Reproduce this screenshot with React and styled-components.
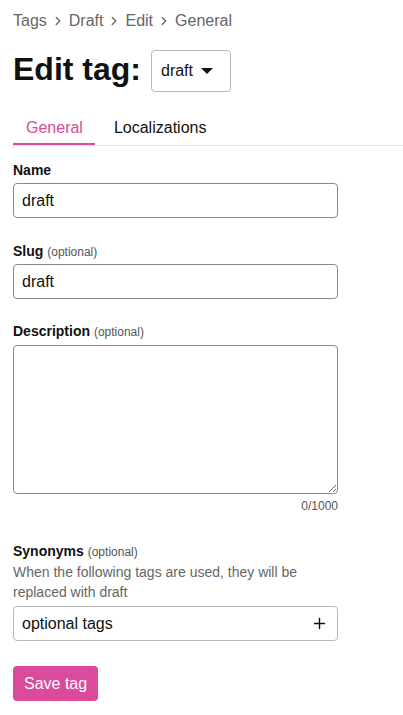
import React from "react";
import styled, { createGlobalStyle } from "styled-components";
import { ChevronRight, Plus } from "lucide-react";

const Global = createGlobalStyle`
  html, body { margin: 0; padding: 0; background: #fff; }
  body { font-family: "Liberation Sans", Arial, sans-serif; color: #111; }
  * { box-sizing: border-box; }
`;

const PINK = "#db4a9b";

const Page = styled.div`
  padding: 12px 0 20px 13px;
`;

const Breadcrumb = styled.nav`
  display: flex;
  align-items: center;
  gap: 4px;
  font-size: 16px;
  line-height: 18px;
  color: #666;
`;

const Crumb = styled.span`
  color: #666;
`;

const Sep = styled(ChevronRight)`
  color: #666;
`;

const HeaderRow = styled.div`
  display: flex;
  align-items: center;
  gap: 10px;
  margin-top: 20px;
`;

const Title = styled.h1`
  margin: 0;
  font-size: 32px;
  font-weight: bold;
  line-height: 37px;
  color: #111;
  position: relative;
  top: -2px;
`;

const Dropdown = styled.button`
  display: flex;
  align-items: center;
  gap: 8px;
  height: 42px;
  width: 80px;
  padding: 0 0 0 9px;
  border: 1px solid #b8b8b8;
  border-radius: 4px;
  background: #fff;
  font-family: inherit;
  font-size: 16px;
  color: #111;
`;

const Caret = styled.span`
  width: 0;
  height: 0;
  border-left: 6px solid transparent;
  border-right: 6px solid transparent;
  border-top: 6px solid #111;
`;

const Tabs = styled.div`
  display: flex;
  gap: 6px;
  margin-top: 18px;
  border-bottom: 1px solid #e3e3e3;
`;

const Tab = styled.div`
  padding: 9px 12px 6px 13px;
  font-size: 16px;
  line-height: 18px;
  color: ${(p) => (p.$active ? PINK : "#111")};
  border-bottom: 2px solid ${(p) => (p.$active ? PINK : "transparent")};
`;

const Form = styled.div`
  width: 325px;
  padding-top: 16px;
`;

const Field = styled.div`
  display: flex;
  flex-direction: column;
  margin-bottom: ${(p) => p.$mb || 25}px;
`;

const Label = styled.label`
  font-size: 14px;
  line-height: 16px;
  height: 16px;
  font-weight: bold;
  color: #111;
  margin-bottom: ${(p) => p.$mb ?? 5}px;
`;

const Optional = styled.span`
  font-weight: normal;
  font-size: 12px;
  line-height: 1;
  color: #555;
`;

const Help = styled.div`
  font-size: 14px;
  line-height: 19.5px;
  color: #666;
  margin-bottom: 4px;
`;

const Input = styled.input`
  height: 35px;
  width: 100%;
  padding: 0 8px;
  border: 1px solid #8a8a8a;
  border-radius: 4px;
  font-family: inherit;
  font-size: 16px;
  color: #111;
  outline: none;
`;

const TextArea = styled.textarea`
  height: 149px;
  width: 100%;
  border: 1px solid #8a8a8a;
  border-radius: 4px;
  font-family: inherit;
  font-size: 16px;
  resize: vertical;
  outline: none;
  display: block;
`;

const Counter = styled.div`
  text-align: right;
  font-size: 12px;
  line-height: 14px;
  color: #555;
  margin-top: 5px;
`;

const TagBox = styled.div`
  display: flex;
  align-items: center;
  justify-content: space-between;
  height: 35px;
  padding: 0 9px 0 8px;
  border: 1px solid #b8b8b8;
  border-radius: 4px;
  font-size: 16px;
  color: #111;
`;

const SaveButton = styled.button`
  height: 35px;
  padding: 0 11px;
  border: none;
  border-radius: 4px;
  background: ${PINK};
  color: #fff;
  font-family: inherit;
  font-size: 16px;
`;

export default function App() {
  return (
    <>
      <Global />
      <Page>
        <Breadcrumb>
          <Crumb>Tags</Crumb>
          <Sep size={14} strokeWidth={2.2} />
          <Crumb>Draft</Crumb>
          <Sep size={14} strokeWidth={2.2} />
          <Crumb>Edit</Crumb>
          <Sep size={14} strokeWidth={2.2} />
          <Crumb>General</Crumb>
        </Breadcrumb>
        <HeaderRow>
          <Title>Edit tag:</Title>
          <Dropdown>
            draft
            <Caret />
          </Dropdown>
        </HeaderRow>
        <Tabs>
          <Tab $active>General</Tab>
          <Tab>Localizations</Tab>
        </Tabs>
        <Form>
          <Field>
            <Label>Name</Label>
            <Input defaultValue="draft" />
          </Field>
          <Field $mb={24}>
            <Label>
              Slug <Optional>(optional)</Optional>
            </Label>
            <Input defaultValue="draft" />
          </Field>
          <Field $mb={30}>
            <Label $mb={6}>
              Description <Optional>(optional)</Optional>
            </Label>
            <TextArea />
            <Counter>0/1000</Counter>
          </Field>
          <Field>
            <Label $mb={4}>
              Synonyms <Optional>(optional)</Optional>
            </Label>
            <Help>When the following tags are used, they will be replaced with draft</Help>
            <TagBox>
              <span>optional tags</span>
              <Plus size={17} strokeWidth={2} color="#111" />
            </TagBox>
          </Field>
          <SaveButton>Save tag</SaveButton>
        </Form>
      </Page>
    </>
  );
}
